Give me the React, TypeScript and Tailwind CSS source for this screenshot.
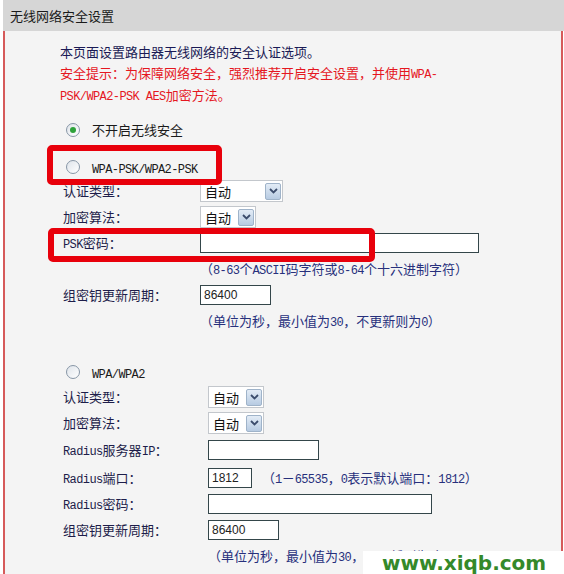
import React from "react";

const L = ({ children }: { children: React.ReactNode }) => (
  <span className="font-['Liberation_Mono',monospace] text-[12px] tracking-[-0.6px] leading-none">{children}</span>
);

function Radio({ checked }: { checked?: boolean }) {
  return (
    <span className="w-[14px] h-[14px] rounded-full border border-[#8796a6] bg-gradient-to-br from-[#dfe4ea] to-white flex items-center justify-center shrink-0">
      {checked && <span className="w-[6px] h-[6px] rounded-full bg-[#2ea23a]" />}
    </span>
  );
}

function Arrow() {
  return (
    <span className="w-[16px] h-[17px] border border-[#9fb3c9] rounded-[2px] bg-gradient-to-b from-[#e3ecf6] to-[#b7cbe2] flex items-center justify-center shrink-0">
      <svg width="9" height="6" viewBox="0 0 9 6">
        <path d="M1 1 L4.5 4.5 L8 1" fill="none" stroke="#3b4c6c" strokeWidth="1.8" />
      </svg>
    </span>
  );
}

function Select({ wide }: { wide?: boolean }) {
  return (
    <div
      className={
        wide
          ? "w-[83px] h-[22px] border border-[#c3c7cc] bg-white flex items-center pr-[1px]"
          : "w-[56px] h-[22px] border border-[#c3c7cc] bg-white flex items-center pr-[1px]"
      }
    >
      <span className="flex-1 pl-[4px] text-[13px] text-[#111] leading-none">自动</span>
      <Arrow />
    </div>
  );
}

function Input({ w, value }: { w: string; value?: string }) {
  return (
    <div
      className={`${w} h-[20px] border border-[#34464a] bg-white flex items-center pl-[3px] font-['Liberation_Sans',sans-serif] text-[12px] text-[#222]`}
    >
      {value}
    </div>
  );
}

export default function App() {
  const label = "text-[13px] leading-[16px] text-[#1d1d4a]";
  const hint = "text-[13px] leading-[16px] text-[#27307c]";
  return (
    <div className="w-[564px] h-[574px] relative overflow-hidden bg-white font-['Noto_Sans_CJK_SC',sans-serif]">
      <div className="ml-[3px] h-[31px] bg-[#d6d6d6] flex items-center pl-[7px] text-[13px] text-[#1a1a1a]">
        无线网络安全设置
      </div>
      <div className="ml-[3px] mr-[1px] h-[543px] bg-[#f4f4f4] border-l-2 border-r-2 border-[#d65a5a] pt-[10px]">
        <div className="pl-[55px] text-[13px]">
          <div className="h-[21px] leading-[21px] text-[#1a1a55]">本页面设置路由器无线网络的安全认证选项。</div>
          <div className="h-[22px] leading-[22px] text-[#e5171f]">
            安全提示：为保障网络安全，强烈推荐开启安全设置，并使用<L>WPA-</L>
          </div>
          <div className="h-[22px] leading-[22px] text-[#e5171f]">
            <L>PSK/WPA2-PSK AES</L>加密方法。
          </div>
        </div>

        <div className="mt-[13px] h-[22px] flex items-center pl-[61px] gap-[12px]">
          <Radio checked />
          <span className="text-[13px] text-[#1a1a1a]">不开启无线安全</span>
        </div>
        <div className="mt-[15px] h-[22px] flex items-center pl-[61px] gap-[12px]">
          <Radio />
          <span className="text-[#1a1a1a] leading-none">
            <L>WPA-PSK/WPA2-PSK</L>
          </span>
        </div>

        <div className="pl-[58px]">
          <div className="h-[26px] flex items-center">
            <span className={`w-[137px] ${label}`}>认证类型：</span>
            <Select wide />
          </div>
          <div className="h-[26px] flex items-center">
            <span className={`w-[137px] ${label}`}>加密算法：</span>
            <Select />
          </div>
          <div className="h-[26px] flex items-center">
            <span className={`w-[137px] ${label}`}>
              <L>PSK</L>密码：
            </span>
            <Input w="w-[279px]" />
          </div>
          <div className="h-[26px] flex items-center">
            <span className="w-[137px]" />
            <span className={hint}>
              （<L>8-63</L>个<L>ASCII</L>码字符或<L>8-64</L>个十六进制字符）
            </span>
          </div>
          <div className="h-[26px] flex items-center">
            <span className={`w-[137px] ${label}`}>组密钥更新周期：</span>
            <Input w="w-[71px]" value="86400" />
          </div>
          <div className="h-[26px] flex items-center">
            <span className="w-[137px]" />
            <span className={hint}>
              （单位为秒，最小值为<L>30</L>，不更新则为<L>0</L>）
            </span>
          </div>
        </div>

        <div className="mt-[27px] h-[22px] flex items-center pl-[61px] gap-[12px]">
          <Radio />
          <span className="text-[#1a1a1a] leading-none">
            <L>WPA/WPA2</L>
          </span>
        </div>

        <div className="mt-[1px] pl-[58px]">
          <div className="h-[26px] flex items-center">
            <span className={`w-[145px] ${label}`}>认证类型：</span>
            <Select />
          </div>
          <div className="h-[26px] flex items-center">
            <span className={`w-[145px] ${label}`}>加密算法：</span>
            <Select />
          </div>
          <div className="h-[28px] flex items-center">
            <span className={`w-[145px] ${label}`}>
              <L>Radius</L>服务器<L>IP</L>：
            </span>
            <Input w="w-[111px]" />
          </div>
          <div className="h-[27px] flex items-center">
            <span className={`w-[145px] ${label}`}>
              <L>Radius</L>端口：
            </span>
            <Input w="w-[44px]" value="1812" />
            <span className={`ml-[10px] ${hint}`}>
              （<L>1</L>－<L>65535</L>，<L>0</L>表示默认端口：<L>1812</L>）
            </span>
          </div>
          <div className="h-[26px] flex items-center">
            <span className={`w-[145px] ${label}`}>
              <L>Radius</L>密码：
            </span>
            <Input w="w-[224px]" />
          </div>
          <div className="h-[26px] flex items-center">
            <span className={`w-[145px] ${label}`}>组密钥更新周期：</span>
            <Input w="w-[71px]" value="86400" />
          </div>
          <div className="h-[25px] flex items-center">
            <span className="w-[145px]" />
            <span className={hint}>
              （单位为秒，最小值为<L>30</L>，不更新则为<L>0</L>）
            </span>
          </div>
        </div>
      </div>

      {/* red highlight boxes */}
      <div className="absolute left-[47px] top-[145px] w-[175px] h-[40px] border-[6px] border-[#e8000b] rounded-[5px]" />
      <div className="absolute left-[48px] top-[228px] w-[327px] h-[34px] border-[6px] border-[#e8000b] rounded-[5px]" />

      {/* watermark */}
      <div className="absolute left-[363px] top-[551px] w-[201px] h-[23px] bg-white flex items-center pl-[19px]">
        <span className="font-['DejaVu_Sans',sans-serif] font-bold text-[20px] leading-none text-[#34892a]">
          www.xiqb.com
        </span>
      </div>
    </div>
  );
}
